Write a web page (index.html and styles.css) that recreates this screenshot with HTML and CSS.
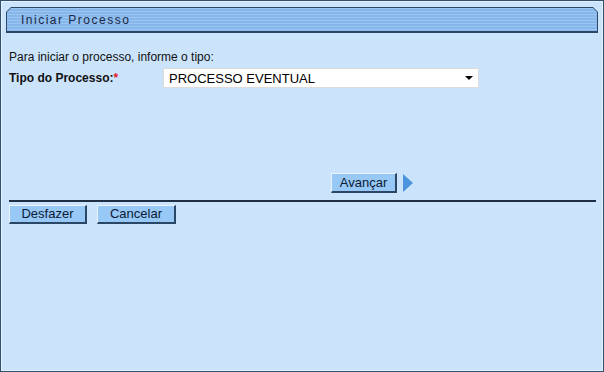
FILE: index.html
```html
<!DOCTYPE html>
<html lang="pt">
<head>
<meta charset="utf-8">
<title>Iniciar Processo</title>
<link rel="stylesheet" href="styles.css">
</head>
<body>
<div class="frame">
  <div class="tab">
    <div class="tab-inner"><span class="tab-title">Iniciar Processo</span></div>
  </div>
  <p class="intro">Para iniciar o processo, informe o tipo:</p>
  <div class="field-row">
    <label class="field-label">Tipo do Processo:<span class="req">*</span></label>
    <div class="select">
      <span class="select-value">PROCESSO EVENTUAL</span>
      <span class="select-arrow"></span>
    </div>
  </div>
  <div class="next-row">
    <button class="btn btn-next">Avançar</button>
    <span class="arrow-next"></span>
  </div>
  <div class="divider"></div>
  <div class="bottom-row">
    <button class="btn btn-undo">Desfazer</button>
    <button class="btn btn-cancel">Cancelar</button>
  </div>
</div>
</body>
</html>
```
FILE: styles.css
```css
html, body {
  margin: 0;
  padding: 0;
  background: #cbe4fc;
}
.frame {
  width: 604px;
  height: 372px;
  box-sizing: border-box;
  border: 1px solid #34506f;
  box-shadow: inset 0 0 0 1px #e4f1fe;
  background: #cbe4fc;
  padding: 6px 5px 0 5px;
  font-family: "Liberation Sans", Arial, sans-serif;
  color: #000;
}
.tab {
  height: 26px;
  background: #2b4766;
  clip-path: polygon(5px 0, calc(100% - 5px) 0, 100% 5px, 100% 100%, 0 100%, 0 5px);
  padding: 1px 1px 2px 1px;
  box-sizing: border-box;
}
.tab-inner {
  height: 100%;
  background: repeating-linear-gradient(to bottom, #9cc6f2 0px, #9cc6f2 1px, #86b6ea 1px, #86b6ea 3px);
  clip-path: polygon(4px 0, calc(100% - 4px) 0, 100% 4px, 100% 100%, 0 100%, 0 4px);
  display: flex;
  align-items: center;
  padding-left: 14px;
}
.tab-title {
  font-size: 12px;
  letter-spacing: 1.5px;
  color: #1b2a46;
  font-weight: normal;
  padding-top: 1px;
}
.intro {
  margin: 17px 0 0 3px;
  font-size: 12px;
  line-height: 14px;
  color: #111;
}
.field-row {
  display: flex;
  align-items: center;
  margin: 4px 0 0 3px;
}
.field-label {
  width: 154px;
  font-size: 12px;
  font-weight: bold;
  color: #111;
}
.req {
  color: #e0202a;
  font-weight: bold;
}
.select {
  width: 316px;
  height: 20px;
  box-sizing: border-box;
  background: #fff;
  border: 1px solid #dcdcdc;
  display: flex;
  align-items: center;
  justify-content: space-between;
  padding: 0 5px 0 5px;
}
.select-value {
  font-size: 13px;
  color: #000;
}
.select-arrow {
  width: 0;
  height: 0;
  border-left: 4px solid transparent;
  border-right: 4px solid transparent;
  border-top: 4px solid #000;
}
.next-row {
  display: flex;
  align-items: center;
  margin: 85px 0 0 325px;
  gap: 6px;
}
.btn {
  font-family: "Liberation Sans", Arial, sans-serif;
  font-size: 13px;
  color: #0b1a35;
  background: #98c8f6;
  border-style: solid;
  border-width: 1px 2px 2px 1px;
  border-color: #e8f3fe #2b4766 #2b4766 #e8f3fe;
  padding: 0;
  margin: 0;
  height: 20px;
  line-height: 16px;
}
.btn-next {
  width: 66px;
}
.arrow-next {
  width: 0;
  height: 0;
  border-top: 9px solid transparent;
  border-bottom: 9px solid transparent;
  border-left: 10px solid #4d93de;
}
.divider {
  height: 2px;
  background: #1e2e44;
  margin: 7px 2px 0 3px;
}
.bottom-row {
  display: flex;
  gap: 10px;
  margin: 3px 0 0 3px;
}
.btn-undo {
  width: 78px;
  height: 19px;
}
.btn-cancel {
  width: 79px;
  height: 19px;
}
```
